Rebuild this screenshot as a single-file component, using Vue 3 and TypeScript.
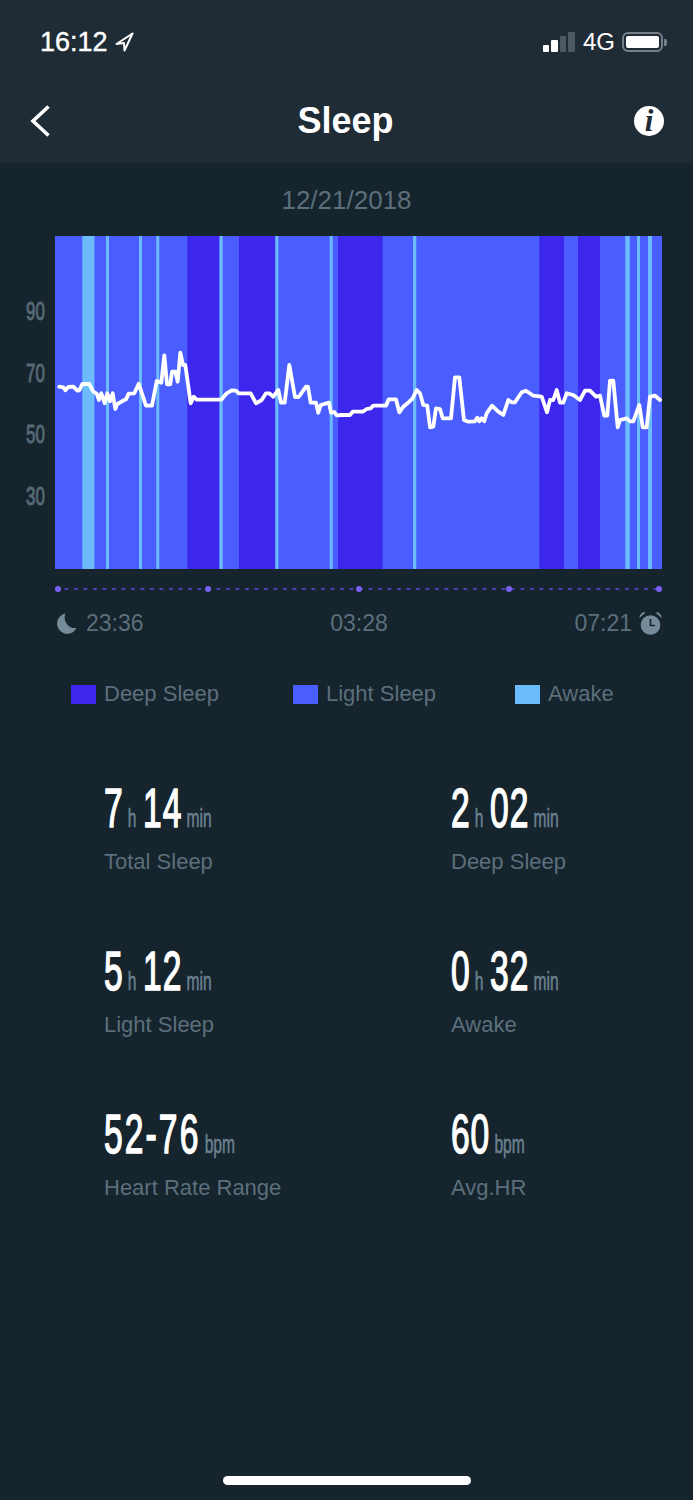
<script setup lang="ts">
type Band = [number, number, 'deep' | 'awake']

const chartLeft = 55
const chartTop = 236
const chartWidth = 607
const chartHeight = 333

const colors = { deep: '#3e27ec', awake: '#6cbcfb' }

// page x from / to
const bands: Band[] = [
  [82.3, 94.4, 'awake'],
  [106, 109, 'awake'],
  [139, 142, 'awake'],
  [156.3, 159.3, 'awake'],
  [187.3, 219.5, 'deep'],
  [219.5, 222.7, 'awake'],
  [239, 275.3, 'deep'],
  [275.3, 278.3, 'awake'],
  [329.7, 332.7, 'awake'],
  [338, 382.7, 'deep'],
  [413, 416.3, 'awake'],
  [539.3, 564, 'deep'],
  [578, 600, 'deep'],
  [625.3, 629.7, 'awake'],
  [637, 640, 'awake'],
  [648, 652, 'awake']
]

// traced from a 3x crop starting at page (0,230)
const leftLine = [
  178,470,190,472,196,481,205,471,220,470,232,482,238,481,247,462,268,462,280,485,290,491,297,510,
  304,490,314,520,322,490,330,514,338,490,346,537,352,522,366,514,378,508,386,491,403,490,416,461,
  438,527,456,527,470,453,484,458,493,376,501,463,511,463,516,425,526,425,533,455,541,368,549,405,
  556,405,572,520,581,500,590,509,664,509,680,490,695,481,708,482,716,490,752,490,768,520,785,510,
  798,490,808,490,820,500,835,480,843,518,854,518,868,405,885,501,896,501,918,470,924,470,932,518,
  948,518,955,548,962,525,987,518,993,548,1003,546,1010,556,1020,556
]
// same, crop starting at page (340,230)
const rightLine = [
  0,555,30,555,38,545,68,545,80,537,92,535,100,527,138,527,146,508,168,508,178,547,190,530,208,515,
  218,505,230,480,240,490,250,525,262,527,270,592,280,590,288,535,300,537,308,565,333,565,345,442,
  358,442,372,570,385,575,405,574,412,563,418,574,425,565,433,574,440,550,456,527,475,545,490,555,
  505,510,515,517,525,517,545,487,558,482,580,497,605,500,621,547,630,510,640,510,650,480,660,518,
  670,518,680,490,700,495,720,510,735,482,750,482,768,500,780,497,793,557,802,557,810,452,820,452,
  833,592,840,570,860,565,870,574,880,574,898,525,908,592,920,592,930,500,945,497,960,510
]

function toPoints(raw: number[], originX: number): string {
  const out: string[] = []
  for (let i = 0; i < raw.length; i += 2) {
    const x = originX + raw[i] / 3 - chartLeft
    const y = 230 + raw[i + 1] / 3 - chartTop
    out.push(`${x.toFixed(1)},${y.toFixed(1)}`)
  }
  return out.join(' ')
}

const linePoints = `${toPoints(leftLine, 0)} ${toPoints(rightLine, 340)}`

const axis = ['90', '70', '50', '30']

const legend = [
  { label: 'Deep Sleep', color: colors.deep },
  { label: 'Light Sleep', color: '#4a5eff' },
  { label: 'Awake', color: colors.awake }
]

const stats = [
  { parts: [['7', 'h'], ['14', 'min']], label: 'Total Sleep' },
  { parts: [['2', 'h'], ['02', 'min']], label: 'Deep Sleep' },
  { parts: [['5', 'h'], ['12', 'min']], label: 'Light Sleep' },
  { parts: [['0', 'h'], ['32', 'min']], label: 'Awake' },
  { parts: [['52-76', 'bpm']], label: 'Heart Rate Range' },
  { parts: [['60', 'bpm']], label: 'Avg.HR' }
]
</script>

<template>
  <div class="page">
    <header class="top">
      <div class="status">
        <div class="status-left">
          <span class="clock">16:12</span>
          <svg class="arrow" width="19" height="20" viewBox="0 0 19 20">
            <path d="M17.5 1.5 L1.5 12 L9 11 L9.5 18.5 Z" fill="none" stroke="#fff" stroke-width="2" stroke-linejoin="round" />
          </svg>
        </div>
        <div class="status-right">
          <div class="signal">
            <i class="on" style="height: 7px"></i>
            <i class="on" style="height: 12px"></i>
            <i style="height: 16px"></i>
            <i style="height: 20px"></i>
          </div>
          <span class="net">4G</span>
          <div class="battery"><div class="cell"></div></div>
          <div class="nub"></div>
        </div>
      </div>
      <nav class="nav">
        <svg class="back" width="20" height="32" viewBox="0 0 20 32">
          <path d="M18.5 1.5 L3 16 L18.5 30.5" fill="none" stroke="#fff" stroke-width="3.6" />
        </svg>
        <h1>Sleep</h1>
        <div class="info"><span>i</span></div>
      </nav>
    </header>

    <div class="date">12/21/2018</div>

    <div class="chart-row">
      <div class="axis">
        <span v-for="tick in axis" :key="tick"><b>{{ tick }}</b></span>
      </div>
      <svg class="chart" :width="chartWidth" :height="chartHeight" :viewBox="`0 0 ${chartWidth} ${chartHeight}`">
        <rect width="607" height="333" fill="#4a5eff" />
        <rect
          v-for="(band, i) in bands"
          :key="i"
          :x="band[0] - chartLeft"
          y="0"
          :width="band[1] - band[0]"
          :height="chartHeight"
          :fill="colors[band[2]]"
        />
        <polyline :points="linePoints" fill="none" stroke="#fff" stroke-width="3.8" stroke-linejoin="round" stroke-linecap="round" />
      </svg>
    </div>

    <div class="timeline">
      <i v-for="n in 5" :key="n"></i>
    </div>

    <div class="times">
      <div class="time">
        <svg width="20" height="21" viewBox="0 0 20 21">
          <path d="M8.5 0.5 A10.2 10.2 0 1 0 19.5 15 A10.5 10.5 0 0 1 8.5 0.5 Z" fill="#768b9a" />
        </svg>
        <span>23:36</span>
      </div>
      <span class="mid">03:28</span>
      <div class="time">
        <span>07:21</span>
        <svg width="23" height="23" viewBox="0 0 23 23">
          <path d="M0.5 6 A5 5 0 0 1 6.5 0.5 Z M22.5 6 A5 5 0 0 0 16.5 0.5 Z" fill="#768b9a" />
          <circle cx="11.5" cy="13" r="9.8" fill="#768b9a" />
          <path d="M11.5 7 V13.5 H16" fill="none" stroke="#15242d" stroke-width="1.6" />
        </svg>
      </div>
    </div>

    <div class="legend">
      <div v-for="item in legend" :key="item.label" class="legend-item">
        <i :style="{ background: item.color }"></i>
        <span>{{ item.label }}</span>
      </div>
    </div>

    <div class="stats">
      <div v-for="stat in stats" :key="stat.label" class="stat">
        <div class="value">
          <template v-for="part in stat.parts" :key="part[0]">
            <span class="num" :class="{ range: part[0].includes('-') }">{{ part[0] }}</span><span class="unit">{{ part[1] }}</span>
          </template>
        </div>
        <div class="label">{{ stat.label }}</div>
      </div>
    </div>

    <div class="home"></div>
  </div>
</template>

<style scoped>
.page {
  height: 1500px;
  display: flex;
  flex-direction: column;
  background: #15242d;
  color: #5c6f7c;
  font-family: "Liberation Sans", Arial, sans-serif;
  overflow: hidden;
}
.top {
  height: 163px;
  background: #1f2c36;
  color: #fff;
}
.status {
  display: flex;
  justify-content: space-between;
  align-items: center;
  height: 40px;
  margin-top: 22px;
  padding: 0 26px 0 40px;
}
.status-left,
.status-right {
  display: flex;
  align-items: center;
}
.clock {
  font-size: 27px;
  -webkit-text-stroke: 0.4px #fff;
}
.arrow {
  margin-left: 7px;
}
.signal {
  display: flex;
  align-items: flex-end;
  gap: 2px;
  height: 20px;
}
.signal i {
  width: 6.5px;
  border-radius: 1px;
  background: #4d5a63;
}
.signal i.on {
  background: #fff;
}
.net {
  font-size: 24px;
  margin: 0 7px 0 8px;
}
.battery {
  width: 41px;
  height: 20px;
  box-sizing: border-box;
  border: 2px solid #75808a;
  border-radius: 6px;
  padding: 2px;
}
.cell {
  height: 100%;
  background: #fff;
  border-radius: 2px;
}
.nub {
  width: 3px;
  height: 7px;
  margin-left: 1px;
  background: #75808a;
  border-radius: 0 2px 2px 0;
}
.nav {
  display: grid;
  grid-template-columns: 1fr auto 1fr;
  align-items: center;
  height: 84px;
  padding: 17px 29px 0 30px;
}
.nav h1 {
  margin: 0 3px 0 0;
  font-size: 36px;
  font-weight: 700;
}
.info {
  justify-self: end;
  width: 30px;
  height: 30px;
  border-radius: 50%;
  background: #fff;
  color: #1f2c36;
  display: flex;
  align-items: center;
  justify-content: center;
  font-family: "Liberation Serif", serif;
  font-style: italic;
  font-weight: 700;
  font-size: 31px;
  line-height: 30px;
}
.date {
  margin-top: 22px;
  height: 30px;
  line-height: 30px;
  margin-bottom: 21px;
  text-align: center;
  font-size: 26px;
}
.chart-row {
  display: flex;
}
.axis {
  width: 55px;
  box-sizing: border-box;
  padding: 45px 10px 0 0;
  display: flex;
  flex-direction: column;
}
.axis span {
  height: 61.67px;
  line-height: 61.67px;
  text-align: right;
  font-size: 26px;
  color: #566a76;
}
.axis b {
  display: inline-block;
  font-weight: 400;
  -webkit-text-stroke: 1px #566a76;
  transform: scaleX(0.65);
  transform-origin: right center;
}
.chart {
  display: block;
}
.timeline {
  display: flex;
  justify-content: space-between;
  align-items: center;
  height: 6px;
  margin: 17px 31px 0 55px;
  background: linear-gradient(90deg, #4d3eb4 3.5px, transparent 3.5px) left center / 9.5px 2px repeat-x;
}
.timeline i {
  width: 6px;
  height: 6px;
  border-radius: 50%;
  background: #7a60f2;
}
.times {
  display: flex;
  justify-content: space-between;
  align-items: center;
  height: 24px;
  margin-top: 19px;
  padding: 0 31px 0 57px;
  font-size: 23px;
}
.time {
  display: flex;
  align-items: center;
  gap: 9px;
}
.time:last-child {
  gap: 7px;
}
.legend {
  display: flex;
  margin-top: 49px;
  padding-left: 71px;
  height: 20px;
  font-size: 22px;
}
.legend-item {
  flex: none;
  width: 222px;
  display: flex;
  align-items: center;
  gap: 8px;
}
.legend-item i {
  width: 25px;
  height: 19px;
}
.stats {
  display: grid;
  grid-template-columns: 347px 1fr;
  grid-auto-rows: 163px;
  margin-top: 76px;
  padding-left: 104px;
}
.value {
  height: 56px;
  line-height: 56px;
  white-space: nowrap;
  transform: scaleX(0.6);
  transform-origin: left center;
}
.num {
  font-size: 56px;
  font-weight: 400;
  color: #fff;
  letter-spacing: 1.5px;
  -webkit-text-stroke: 1.6px #fff;
}
.num.range {
  letter-spacing: 3.5px;
}
.unit {
  font-size: 26px;
  font-weight: 400;
  color: #6b8190;
  -webkit-text-stroke: 0.6px #6b8190;
  margin: 0 11px 0 7px;
}
.label {
  margin-top: 13px;
  height: 26px;
  line-height: 26px;
  font-size: 22px;
}
.home {
  margin: auto 0 15px 223px;
  width: 248px;
  height: 9px;
  border-radius: 5px;
  background: #fff;
}
</style>
